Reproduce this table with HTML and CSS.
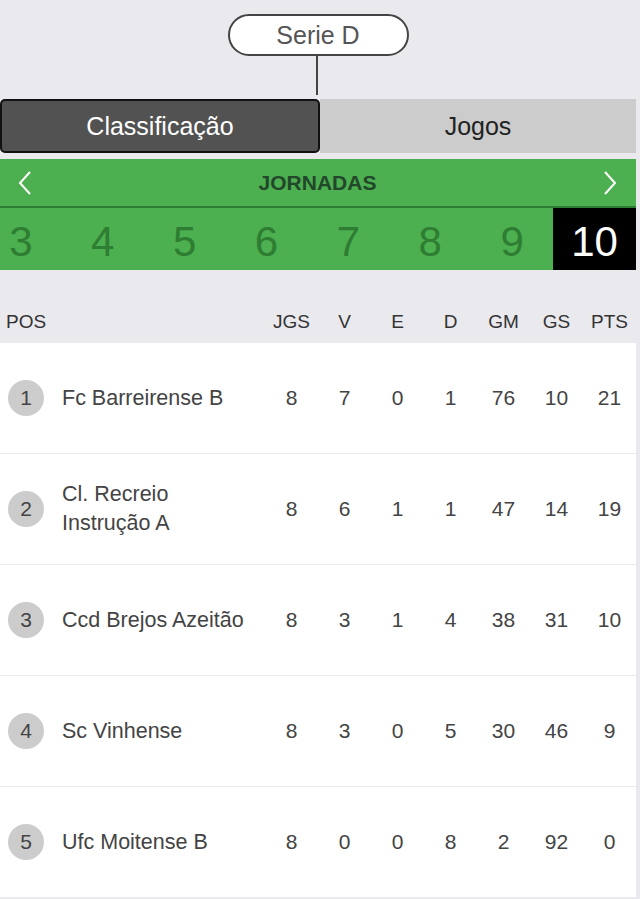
FILE: index.html
```html
<!DOCTYPE html>
<html lang="pt">
<head>
<meta charset="utf-8">
<title>Serie D - Classificação</title>
<link rel="stylesheet" href="styles.css">
</head>
<body>
<div class="page">
  <div class="series">
    <div class="pill">Serie D</div>
    <div class="stem"></div>
  </div>
  <div class="tabs">
    <div class="tab active">Classificação</div>
    <div class="tab">Jogos</div>
  </div>
  <div class="rounds">
    <div class="rounds-head">
      <svg class="chev" viewBox="0 0 16 26" width="16" height="26"><polyline points="13,2 3,13 13,24" fill="none" stroke="#fff" stroke-width="2"/></svg>
      <span class="rounds-title">JORNADAS</span>
      <svg class="chev" viewBox="0 0 16 26" width="16" height="26"><polyline points="3,2 13,13 3,24" fill="none" stroke="#fff" stroke-width="2"/></svg>
    </div>
    <div class="rounds-list">
      <div class="rounds-track">
        <div class="round">3</div>
        <div class="round">4</div>
        <div class="round">5</div>
        <div class="round">6</div>
        <div class="round">7</div>
        <div class="round">8</div>
        <div class="round">9</div>
        <div class="round current">10</div>
      </div>
    </div>
  </div>
  <div class="table">
    <div class="thead">
      <div class="pos-h">POS</div>
      <div class="name"></div>
      <div class="c">JGS</div><div class="c">V</div><div class="c">E</div><div class="c">D</div><div class="c">GM</div><div class="c">GS</div><div class="c">PTS</div>
    </div>
    <div class="row">
      <div class="pos"><span class="badge">1</span></div>
      <div class="name">Fc Barreirense B</div>
      <div class="c">8</div><div class="c">7</div><div class="c">0</div><div class="c">1</div><div class="c">76</div><div class="c">10</div><div class="c">21</div>
    </div>
    <div class="row">
      <div class="pos"><span class="badge">2</span></div>
      <div class="name">Cl. Recreio Instrução A</div>
      <div class="c">8</div><div class="c">6</div><div class="c">1</div><div class="c">1</div><div class="c">47</div><div class="c">14</div><div class="c">19</div>
    </div>
    <div class="row">
      <div class="pos"><span class="badge">3</span></div>
      <div class="name">Ccd Brejos Azeitão</div>
      <div class="c">8</div><div class="c">3</div><div class="c">1</div><div class="c">4</div><div class="c">38</div><div class="c">31</div><div class="c">10</div>
    </div>
    <div class="row">
      <div class="pos"><span class="badge">4</span></div>
      <div class="name">Sc Vinhense</div>
      <div class="c">8</div><div class="c">3</div><div class="c">0</div><div class="c">5</div><div class="c">30</div><div class="c">46</div><div class="c">9</div>
    </div>
    <div class="row">
      <div class="pos"><span class="badge">5</span></div>
      <div class="name">Ufc Moitense B</div>
      <div class="c">8</div><div class="c">0</div><div class="c">0</div><div class="c">8</div><div class="c">2</div><div class="c">92</div><div class="c">0</div>
    </div>
  </div>
</div>
</body>
</html>
```

FILE: styles.css
```css
* { box-sizing: border-box; }
html, body {
  margin: 0;
  padding: 0;
  background: #e9e9ee;
  font-family: "Liberation Sans", Arial, sans-serif;
  color: #333;
}
.page {
  width: 636px;
}
.series {
  display: flex;
  flex-direction: column;
  align-items: center;
  padding-top: 14px;
}
.pill {
  width: 181px;
  height: 42px;
  border: 2px solid #444;
  border-radius: 21px;
  background: #fff;
  color: #555;
  font-size: 25px;
  display: flex;
  align-items: center;
  justify-content: center;
}
.stem {
  width: 2px;
  height: 39px;
  margin-right: 3px;
  background: #444;
}
.tabs {
  display: flex;
  margin-top: 4px;
  height: 54px;
}
.tab {
  flex: 1 1 0;
  display: flex;
  align-items: center;
  justify-content: center;
  font-size: 25px;
  background: #cccccc;
  color: #222;
}
.tab.active {
  background: #525252;
  color: #fff;
  border: 2px solid #111;
  border-radius: 5px;
}
.rounds {
  margin-top: 6px;
  background: #4caf50;
}
.rounds-head {
  height: 49px;
  display: flex;
  align-items: center;
  justify-content: space-between;
  padding: 0 18px 0 17px;
  border-bottom: 2px solid #2f7d32;
}
.rounds-title {
  font-weight: bold;
  font-size: 21px;
  color: #23472a;
}
.rounds-list {
  overflow: hidden;
  height: 62px;
}
.rounds-track {
  display: flex;
  margin-left: -20px;
  height: 100%;
}
.round {
  flex: 0 0 81.86px;
  display: flex;
  align-items: center;
  justify-content: center;
  padding-top: 6px;
  font-size: 42px;
  color: #2e7d32;
}
.round.current {
  flex-basis: 83px;
  background: #000;
  color: #fff;
}
.table {
  margin-top: 31px;
}
.thead {
  display: flex;
  align-items: center;
  height: 42px;
  font-size: 19px;
  color: #333;
}
.pos-h {
  width: 62px;
  padding-left: 6px;
}
.name {
  flex: 1;
}
.c {
  width: 53px;
  text-align: center;
}
.row {
  display: flex;
  align-items: center;
  height: 110px;
  background: #fff;
  margin-bottom: 1px;
  font-size: 21px;
  color: #444;
}
.row .name {
  font-size: 21.5px;
  line-height: 29px;
  padding-right: 10px;
}
.pos {
  width: 62px;
  padding-left: 8px;
}
.badge {
  width: 36px;
  height: 36px;
  border-radius: 50%;
  background: #cccccc;
  display: flex;
  align-items: center;
  justify-content: center;
  font-size: 21px;
  color: #444;
}
```
